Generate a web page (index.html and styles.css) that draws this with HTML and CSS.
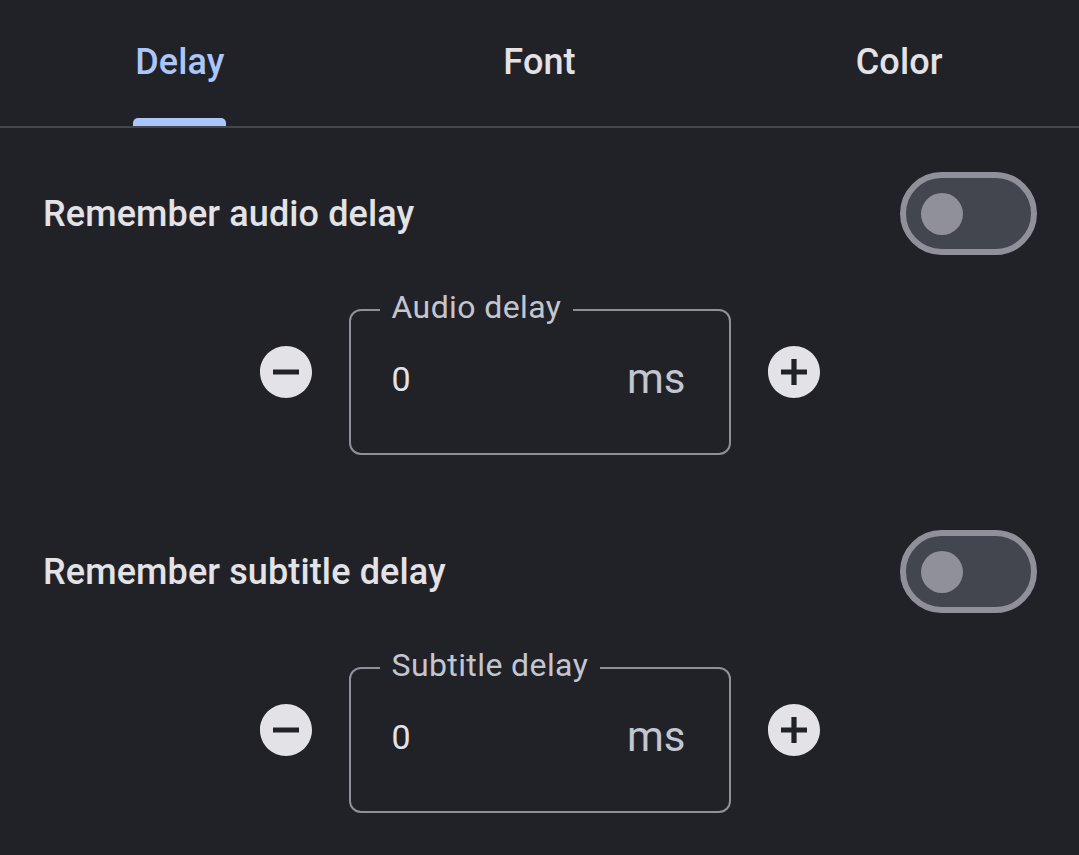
FILE: index.html
```html
<!DOCTYPE html>
<html lang="en">
<head>
<meta charset="utf-8">
<title>Delay settings</title>
<link rel="stylesheet" href="styles.css">
</head>
<body>
<div class="screen">
  <nav class="tabs">
    <div class="tab active"><span class="tab-label">Delay<span class="indicator"></span></span></div>
    <div class="tab"><span class="tab-label">Font</span></div>
    <div class="tab"><span class="tab-label">Color</span></div>
  </nav>
  <div class="content">
    <section class="group">
      <div class="row">
        <span class="row-title">Remember audio delay</span>
        <span class="switch"><span class="thumb"></span></span>
      </div>
      <div class="stepper">
        <button class="step-btn" aria-label="Decrease">
          <svg viewBox="2 2 20 20"><path d="M12 2C6.480 2 2 6.480 2 12s4.480 10 10 10 10-4.480 10-10S17.520 2 12 2zm5 11H7v-2h10v2z"/></svg>
        </button>
        <fieldset class="field">
          <legend class="field-label">Audio delay</legend>
          <div class="field-body">
            <span class="value">0</span>
            <span class="suffix">ms</span>
          </div>
        </fieldset>
        <button class="step-btn" aria-label="Increase">
          <svg viewBox="2 2 20 20"><path d="M12 2C6.480 2 2 6.480 2 12s4.480 10 10 10 10-4.480 10-10S17.520 2 12 2zm5 11h-4v4h-2v-4H7v-2h4V7h2v4h4v2z"/></svg>
        </button>
      </div>
    </section>
    <section class="group">
      <div class="row">
        <span class="row-title">Remember subtitle delay</span>
        <span class="switch"><span class="thumb"></span></span>
      </div>
      <div class="stepper">
        <button class="step-btn" aria-label="Decrease">
          <svg viewBox="2 2 20 20"><path d="M12 2C6.480 2 2 6.480 2 12s4.480 10 10 10 10-4.480 10-10S17.520 2 12 2zm5 11H7v-2h10v2z"/></svg>
        </button>
        <fieldset class="field">
          <legend class="field-label">Subtitle delay</legend>
          <div class="field-body">
            <span class="value">0</span>
            <span class="suffix">ms</span>
          </div>
        </fieldset>
        <button class="step-btn" aria-label="Increase">
          <svg viewBox="2 2 20 20"><path d="M12 2C6.480 2 2 6.480 2 12s4.480 10 10 10 10-4.480 10-10S17.520 2 12 2zm5 11h-4v4h-2v-4H7v-2h4V7h2v4h4v2z"/></svg>
        </button>
      </div>
    </section>
  </div>
</div>
</body>
</html>
```

FILE: styles.css
```css
html, body {
  margin: 0;
  padding: 0;
  background: #212228;
}

body {
  font-family: Roboto, "Noto Sans", "Liberation Sans", sans-serif;
  color: #e3e2e6;
}

.screen {
  width: 1079px;
  height: 855px;
  overflow: hidden;
  background: #212228;
}

.tabs {
  display: grid;
  grid-template-columns: repeat(3, 1fr);
  height: 126px;
  border-bottom: 2px solid #44464d;
}

.tab {
  display: flex;
  justify-content: center;
  align-items: flex-start;
  padding-top: 41px;
}

.tab-label {
  display: flex;
  flex-direction: column;
  align-items: stretch;
  font-size: 36px;
  font-weight: 500;
  line-height: 42px;
  color: #e3e2e6;
  letter-spacing: 0.1px;
}

.tab.active .tab-label {
  color: #abc6fb;
}

.indicator {
  display: block;
  height: 8px;
  margin-top: 35px;
  margin-left: -2px;
  margin-right: -2px;
  background: #abc6fb;
  border-radius: 5px 5px 0 0;
}

.content {
  padding: 44px 42px 0 43px;
}

.group {
  display: flex;
  flex-direction: column;
  margin-bottom: 75px;
}

.row {
  display: flex;
  align-items: center;
  justify-content: space-between;
  height: 83px;
}

.row-title {
  font-size: 36px;
  font-weight: 500;
  line-height: 42px;
  letter-spacing: 0.12px;
  color: #e3e2e6;
}

.switch {
  box-sizing: border-box;
  display: flex;
  align-items: center;
  width: 137px;
  height: 83px;
  padding-left: 15px;
  border: 6px solid #8f9099;
  border-radius: 42px;
  background: #44464f;
}

.thumb {
  width: 42px;
  height: 42px;
  border-radius: 50%;
  background: #8f9099;
}

.stepper {
  display: flex;
  align-items: center;
  justify-content: center;
  gap: 37px;
  margin-top: 36px;
  margin-left: -43px;
  margin-right: -42px;
}

.step-btn {
  display: flex;
  width: 52px;
  height: 52px;
  padding: 0;
  margin: -2px 0 0;
  border: 0;
  background: transparent;
}

.step-btn svg {
  width: 52px;
  height: 52px;
  fill: #e3e2e6;
}

.field {
  box-sizing: border-box;
  width: 382px;
  margin: 0;
  padding: 0;
  border: 2px solid #8f9099;
  border-radius: 12px;
  min-width: 0;
}

.field-label {
  margin-left: 29px;
  padding: 0 12px;
  font-size: 32px;
  line-height: 38px;
  letter-spacing: 0.4px;
  color: #c4c6cf;
  position: relative;
  top: -3px;
}

.field-body {
  display: flex;
  align-items: center;
  justify-content: space-between;
  height: 100px;
  padding: 0 43px 24px 41px;
}

.value {
  font-size: 34px;
  line-height: 40px;
  color: #e3e2e6;
}

.suffix {
  font-size: 42px;
  line-height: 48px;
  color: #c4c6cf;
}
```
